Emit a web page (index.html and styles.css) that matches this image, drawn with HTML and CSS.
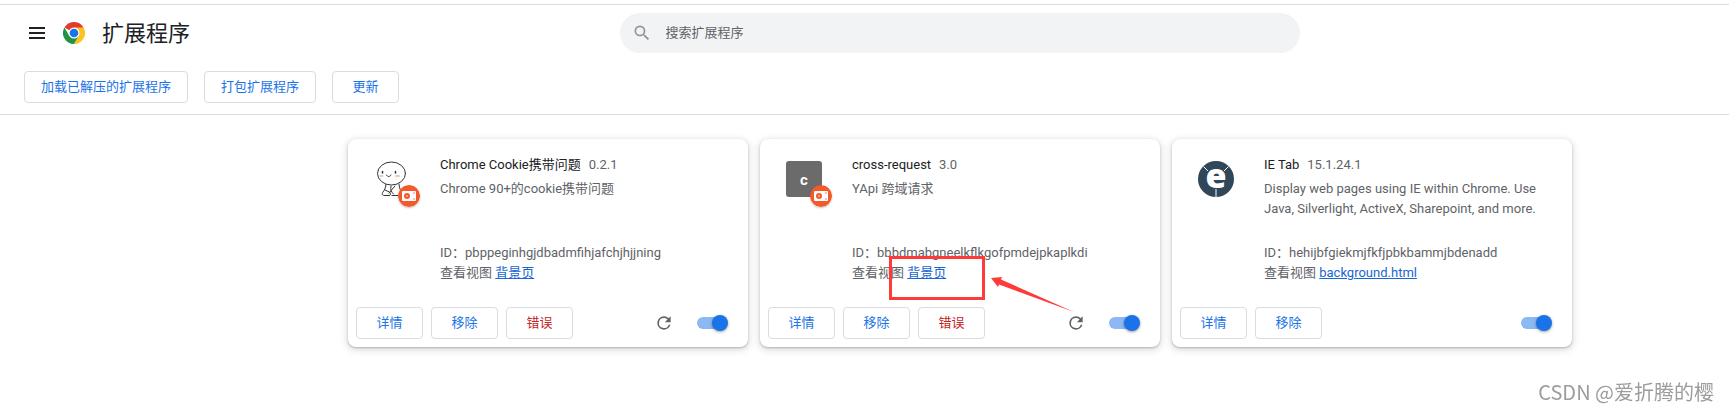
FILE: index.html
```html
<!DOCTYPE html>
<html lang="zh-CN">
<head>
  <meta charset="UTF-8">
  <title>扩展程序</title>
  <link rel="stylesheet" href="styles.css">
</head>
<body>

<svg class="defs" width="0" height="0" aria-hidden="true">
  <symbol id="reload" viewBox="0 0 24 24">
    <path d="M17.65 6.35A7.96 7.96 0 0 0 12 4a8 8 0 1 0 7.73 10h-2.08A6 6 0 1 1 12 6c1.66 0 3.14.69 4.22 1.78L13 11h7V4z"/>
  </symbol>
  <symbol id="unpacked" viewBox="0 0 22 22">
    <circle cx="11" cy="11" r="11" fill="#f4592a"/>
    <rect x="4" y="6" width="14" height="10" rx="1" fill="#fff"/>
    <circle cx="9" cy="11" r="3" fill="#f4592a"/>
    <circle cx="9" cy="11" r="1" fill="#fbb9a4"/>
    <circle cx="16" cy="8" r=".7" fill="#f4592a"/>
    <circle cx="16" cy="14" r=".7" fill="#f4592a"/>
  </symbol>
</svg>

<header class="header">
  <button class="menu" aria-label="主菜单">
    <svg width="16" height="12" viewBox="0 0 16 12"><path d="M0 0h16v2H0zM0 5h16v2H0zM0 10h16v2H0z"/></svg>
  </button>
  <svg class="logo" width="22" height="22" viewBox="0 0 48 48">
    <path d="M24 24 3.2 12A24 24 0 0 1 44.8 12z" fill="#e33b2e"/>
    <path d="M24 12h20.8A24 24 0 0 1 24 48L34.4 30z" fill="#fcc31e"/>
    <path d="M3.2 12A24 24 0 0 0 24 48l10.4-18-10.4 4-10.4-4z" fill="#229342"/>
    <circle cx="24" cy="24" r="12" fill="#fff"/>
    <circle cx="24" cy="24" r="9.5" fill="#1a73e8"/>
  </svg>
  <h1>扩展程序</h1>
  <div class="search-area">
    <label class="search">
      <svg width="20" height="20" viewBox="0 0 24 24"><path d="M15.5 14h-.79l-.28-.27A6.47 6.47 0 0 0 16 9.5 6.5 6.5 0 1 0 9.5 16c1.61 0 3.09-.59 4.23-1.57l.27.28v.79l5 4.99L20.49 19zm-6 0a4.5 4.5 0 1 1 0-9 4.5 4.5 0 0 1 0 9z"/></svg>
      <input type="search" placeholder="搜索扩展程序" aria-label="搜索扩展程序">
    </label>
  </div>
</header>

<div class="toolbar">
  <button class="btn">加载已解压的扩展程序</button>
  <button class="btn">打包扩展程序</button>
  <button class="btn">更新</button>
</div>

<main class="list">
  <article class="card">
    <div class="main">
      <div class="icon">
        <svg width="36" height="36" viewBox="0 0 36 36" fill="none" stroke="#333" stroke-width="1" stroke-linecap="round">
          <ellipse cx="17.500" cy="12.500" rx="14" ry="11.500"/>
          <path d="M12 23.500c-.5 4-1.500 5.500-3 7.500-1.500 2-1 3.500 2 3.500h4c2 0 2-2 .5-3.500L11 29M25 23c.2 3 .8 5 2 7M17 25c-1 4 .5 6 2.500 8M21 25l-6 7M18 34.500h6"/>
          <path d="M12.500 14c1.200 2.200 3.200 2.200 4.500 0"/>
          <path d="M8.500 10.500V12M21.500 10.500V12" stroke-width="1.500"/>
          <path d="M6.500 15h2M22 15h3" stroke="#efc9a9" stroke-width="2"/>
        </svg>
        <svg class="badge" width="22" height="22"><use href="#unpacked"/></svg>
      </div>
      <div class="content">
        <div class="heading"><h2>Chrome Cookie携带问题</h2><span>0.2.1</span></div>
        <p class="description">Chrome 90+的cookie携带问题</p>
        <div class="info">
          <div>ID：pbppeginhgjdbadmfihjafchjhjjning</div>
          <div>查看视图 <a href="#">背景页</a></div>
        </div>
      </div>
    </div>
    <div class="actions">
      <button class="btn">详情</button>
      <button class="btn">移除</button>
      <button class="btn error">错误</button>
      <div class="controls">
        <button class="reload" aria-label="重新加载"><svg width="20" height="20"><use href="#reload"/></svg></button>
        <input class="toggle" type="checkbox" aria-label="启用 Chrome Cookie携带问题" checked>
      </div>
    </div>
  </article>

  <article class="card">
    <div class="main">
      <div class="icon">
        <div class="letter">c</div>
        <svg class="badge" width="22" height="22"><use href="#unpacked"/></svg>
      </div>
      <div class="content">
        <div class="heading"><h2>cross-request</h2><span>3.0</span></div>
        <p class="description">YApi 跨域请求</p>
        <div class="info">
          <div>ID：bbbdmabgneelkflkgofpmdejpkaplkdi</div>
          <div>查看视图 <a href="#">背景页</a></div>
        </div>
      </div>
    </div>
    <div class="actions">
      <button class="btn">详情</button>
      <button class="btn">移除</button>
      <button class="btn error">错误</button>
      <div class="controls">
        <button class="reload" aria-label="重新加载"><svg width="20" height="20"><use href="#reload"/></svg></button>
        <input class="toggle" type="checkbox" aria-label="启用 cross-request" checked>
      </div>
    </div>
    <svg class="marker" width="190" height="60" viewBox="0 0 190 60">
      <rect x="1.500" y="1.500" width="93" height="41" fill="none" stroke="#ff3a3a" stroke-width="3"/>
      <path d="M102 22l11-1-1 2.500L185 56l-75-27.500-1 2.500z" fill="#ff3a3a"/>
    </svg>
  </article>

  <article class="card">
    <div class="main">
      <div class="icon">
        <svg class="ie-icon" width="36" height="36" viewBox="0 0 36 36">
          <circle cx="18" cy="18" r="18" fill="#30475a"/>
          <path d="M18 28v8M10 10 5.500 5.500M26 10l4.500-4.500" stroke="#fff" stroke-width="1"/>
          <text class="ie-letter" x="18" y="27" text-anchor="middle">e</text>
        </svg>
      </div>
      <div class="content">
        <div class="heading"><h2>IE Tab</h2><span>15.1.24.1</span></div>
        <p class="description">Display web pages using IE within Chrome. Use Java, Silverlight, ActiveX, Sharepoint, and more.</p>
        <div class="info">
          <div>ID：hehijbfgiekmjfkfjpbkbammjbdenadd</div>
          <div>查看视图 <a href="#">background.html</a></div>
        </div>
      </div>
    </div>
    <div class="actions">
      <button class="btn">详情</button>
      <button class="btn">移除</button>
      <div class="controls">
        <input class="toggle" type="checkbox" aria-label="启用 IE Tab" checked>
      </div>
    </div>
  </article>
</main>

<div class="watermark">CSDN @爱折腾的樱</div>

</body>
</html>
```
FILE: styles.css
```css
* {
  box-sizing: border-box;
}

body {
  margin: 0;
  padding-top: 4px;
  background: #fff;
  color: #5f6368;
  font-family: Roboto, "Noto Sans CJK SC", sans-serif;
  font-size: 13px;
  line-height: 20px;
}

h1, h2, p {
  margin: 0;
  font-weight: 400;
}

button, input {
  font: inherit;
  margin: 0;
}

svg {
  display: block;
}

.defs {
  position: absolute;
}

.header {
  display: flex;
  align-items: center;
  height: 57px;
  padding-left: 29px;
  border-top: 1px solid #dadce0;
}

.header h1 {
  margin-left: 17px;
  padding-top: 2px;
  color: #202124;
  font-size: 22px;
  line-height: 32px;
}

.menu {
  padding: 0;
  border: 0;
  background: none;
  fill: #202124;
}

.logo {
  margin-left: 18px;
}

/* centred on the same axis as the card list */
.search-area {
  flex: 1;
  display: flex;
  justify-content: center;
}

.search {
  display: flex;
  align-items: center;
  gap: 14px;
  width: 100%;
  max-width: 680px;
  height: 40px;
  padding: 0 20px 0 12px;
  border-radius: 20px;
  background: #f1f3f4;
  fill: #8f9296;
}

.search input {
  flex: 1;
  padding: 0;
  border: 0;
  outline: 0;
  background: none;
}

.search input::placeholder {
  color: #5f6368;
}

.toolbar {
  display: flex;
  gap: 16px;
  padding: 10px 24px 11px;
  border-bottom: 1px solid #dadce0;
}

.btn {
  min-width: 67px;
  height: 32px;
  padding: 0 16px;
  border: 1px solid #dadce0;
  border-radius: 4px;
  background: #fff;
  color: #1a73e8;
}

.btn.error {
  color: #c5221f;
}

.list {
  display: flex;
  flex-wrap: wrap;
  justify-content: center;
  gap: 12px;
  padding: 24px 0 24px 191px;
}

.card {
  position: relative;
  display: flex;
  flex-direction: column;
  width: 400px;
  border-radius: 8px;
  background: #fff;
  box-shadow: 0 1px 2px rgba(60, 64, 67, .3), 0 2px 6px 2px rgba(60, 64, 67, .15);
}

.main {
  display: flex;
  gap: 30px;
  min-height: 160px;
  padding: 16px 20px 16px 26px;
}

.icon {
  position: relative;
  flex: none;
  width: 36px;
  height: 36px;
  margin-top: 6px;
}

.badge {
  position: absolute;
  right: -10px;
  bottom: -10px;
  border-radius: 50%;
  box-shadow: 0 1px 2px rgba(60, 64, 67, .3);
}

.letter {
  height: 36px;
  border-radius: 3px;
  background: #6b6b6b;
  color: #fff;
  font-weight: 700;
  font-size: 15px;
  line-height: 38px;
  text-align: center;
}

.ie-icon {
  overflow: visible;
}

.ie-letter {
  fill: #fff;
  font-family: "Open Sans", sans-serif;
  font-weight: 800;
  font-size: 34px;
}

.content {
  flex: 1;
  display: flex;
  flex-direction: column;
}

.heading {
  display: flex;
  gap: 8px;
}

.heading h2 {
  color: #202124;
  font-size: 13px;
}

.description {
  margin-top: 4px;
}

.info {
  margin-top: auto;
}

.info a {
  color: #1967d2;
}

.actions {
  display: flex;
  align-items: center;
  gap: 8px;
  padding: 8px;
}

.controls {
  display: flex;
  align-items: center;
  gap: 23px;
  margin-left: auto;
  padding-right: 12px;
}

.reload {
  padding: 0;
  border: 0;
  background: none;
  fill: #5f6368;
}

.toggle {
  appearance: none;
  position: relative;
  width: 31px;
  height: 16px;
}

.toggle::before {
  content: "";
  position: absolute;
  inset: 2px 3px 2px 0;
  border-radius: 6px;
  background: #8cb8f3;
}

.toggle::after {
  content: "";
  position: absolute;
  top: 0;
  right: 0;
  width: 16px;
  height: 16px;
  border-radius: 50%;
  background: #1a73e8;
  box-shadow: 0 1px 3px rgba(0, 0, 0, .4);
}

/* red annotation drawn over the card */
.marker {
  position: absolute;
  left: 129px;
  top: 117px;
  pointer-events: none;
}

.watermark {
  position: fixed;
  right: 15px;
  bottom: 6px;
  color: #9c9c9c;
  font-family: "Noto Sans CJK SC", sans-serif;
  font-size: 20px;
  line-height: 24px;
}
```
